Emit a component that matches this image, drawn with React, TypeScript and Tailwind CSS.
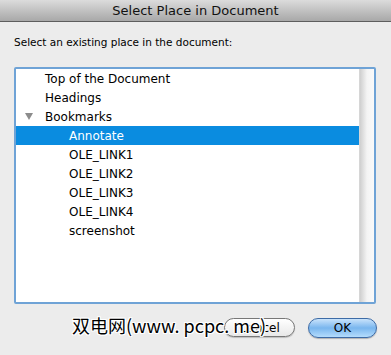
const items = [
  { label: "Top of the Document", depth: 0 },
  { label: "Headings", depth: 0 },
  { label: "Bookmarks", depth: 0, open: true },
  { label: "Annotate", depth: 1, selected: true },
  { label: "OLE_LINK1", depth: 1 },
  { label: "OLE_LINK2", depth: 1 },
  { label: "OLE_LINK3", depth: 1 },
  { label: "OLE_LINK4", depth: 1 },
  { label: "screenshot", depth: 1 },
];

export default function App() {
  return (
    <div className="relative w-[391px] h-[355px] bg-[#ececec] font-['DejaVu_Sans',sans-serif] text-black overflow-hidden">
      {/* title bar */}
      <div className="h-[22px] flex items-center justify-center bg-gradient-to-b from-[#dcdcdc] to-[#a8a8a8] border-b border-[#5e5e5e] text-[13px] text-[#111]">
        Select Place in Document
      </div>

      <div className="px-[14px]">
        <div className="pt-[13px] h-[45px] text-[10.5px]">
          Select an existing place in the document:
        </div>

        <div className="h-[237px] w-[362px] border-2 border-[#6fa3d6] rounded-[2px] bg-white flex">
          <div className="flex-1">
            {items.map((it) => (
              <div
                key={it.label}
                className={
                  "h-[19px] flex items-center text-[12px] " +
                  (it.selected ? "bg-[#0a8ce0] text-white" : "")
                }
              >
                <div className={it.depth ? "w-[53px]" : "w-[29px]"} />
                {it.open ? (
                  <span className="w-0 relative">
                    <span className="absolute left-[-20px] top-[-4px] w-0 h-0 border-l-[4px] border-r-[4px] border-t-[7px] border-l-transparent border-r-transparent border-t-[#8c8c8c]" />
                  </span>
                ) : null}
                <span>{it.label}</span>
              </div>
            ))}
          </div>
          <div className="w-[15px] bg-gradient-to-r from-[#cfcfcf] via-[#f4f4f4] to-[#fafafa] border-l border-[#d6d6d6]" />
        </div>

        <div className="flex justify-end gap-[13px] mt-[14px]">
          <button className="w-[71px] h-[19px] rounded-full border border-[#777] bg-gradient-to-b from-white to-[#e8e8e8] text-[12px] leading-none shadow-[0_1px_1px_rgba(0,0,0,0.2)]">
            Cancel
          </button>
          <button className="w-[69px] h-[20px] rounded-full border border-[#3d6ba6] bg-gradient-to-b from-[#c9e3fb] via-[#79b6ee] to-[#b4dcfc] text-[12px] leading-none shadow-[0_1px_1px_rgba(0,0,0,0.25)]">
            OK
          </button>
        </div>
      </div>

      {/* watermark */}
      <div className="absolute left-[72px] top-[316px] text-[18px] font-['Noto_Sans_CJK_SC','DejaVu_Sans',sans-serif] text-black [text-shadow:1px_0_0_#fff,-1px_0_0_#fff,0_1px_0_#fff,0_-1px_0_#fff,1px_1px_0_#fff,-1px_-1px_0_#fff,1px_-1px_0_#fff,-1px_1px_0_#fff] leading-none whitespace-nowrap">
        双电网(www. pcpc. me)
      </div>
    </div>
  );
}
